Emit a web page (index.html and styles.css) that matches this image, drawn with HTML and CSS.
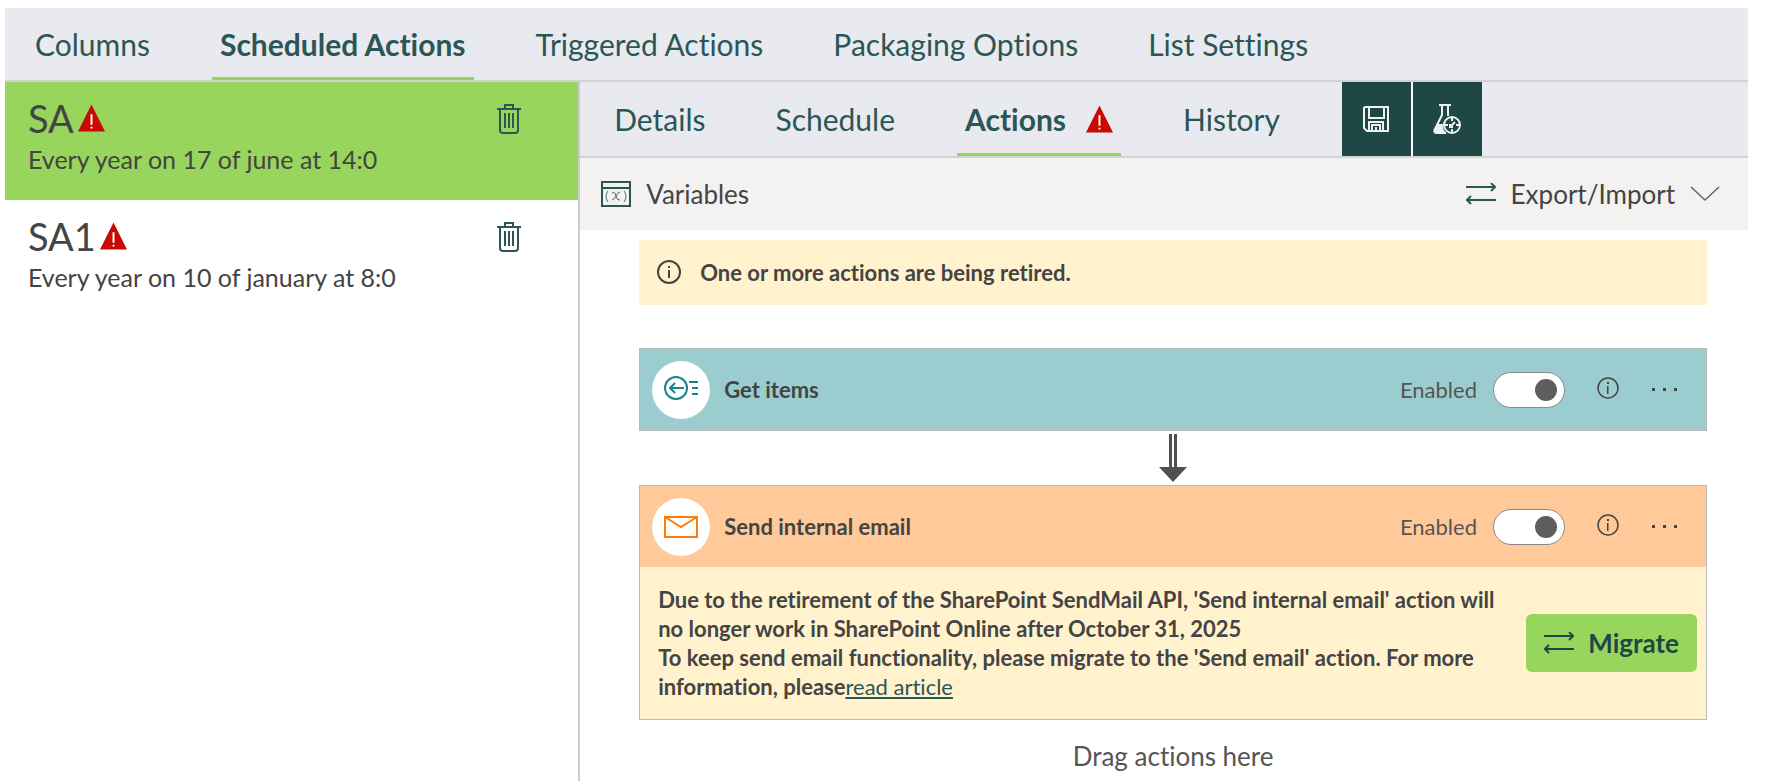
FILE: index.html
```html
<!DOCTYPE html>
<html lang="en">
<head>
    <meta charset="UTF-8">
    <meta name="viewport" content="width=device-width, initial-scale=1.0">
    <title>Scheduled Actions</title>
    <link rel="stylesheet" href="styles.css">
</head>
<body>
    <!-- shared icons -->
    <svg class="sprite" aria-hidden="true">
        <symbol id="icon-warning" viewBox="0 0 28 28">
            <path d="M14 0L28 28H0z" fill="#c80a04"/>
            <path d="M13 10h2v11h-2zM13 23h2v2h-2z" fill="#fff"/>
        </symbol>
        <symbol id="icon-trash" viewBox="0 0 24 30">
            <path d="M0 5h24M8 4V1h8v3M3 5v21q0 3 3 3h12q3 0 3-3V5M8 9v15M12 9v15M16 9v15" fill="none" stroke="currentColor" stroke-width="2"/>
        </symbol>
        <symbol id="icon-swap" viewBox="0 0 30 22">
            <path d="M0 4h29M25 0l4 4-4 4M30 17H1M5 13l-4 4 4 4" fill="none" stroke="currentColor" stroke-width="2"/>
        </symbol>
        <symbol id="icon-info" viewBox="0 0 26 26">
            <circle cx="13" cy="12" r="11" fill="none" stroke="currentColor" stroke-width="2"/>
            <path d="M12 6h2v2h-2zM12 10h2v8h-2z" fill="currentColor"/>
        </symbol>
        <symbol id="icon-info-thin" viewBox="0 0 26 26">
            <circle cx="13" cy="11" r="10" fill="none" stroke="currentColor" stroke-width="1.5"/>
            <path d="M12 5h2v2h-2zM12 9h1.5v8H12z" fill="currentColor"/>
        </symbol>
        <symbol id="icon-more" viewBox="0 0 28 26">
            <path d="M1 11h3v3H1zM12 11h3v3h-3zM23 11h3v3h-3z" fill="currentColor"/>
        </symbol>
    </svg>

    <nav class="tabs">
        <a class="tab" href="#">Columns</a>
        <a class="tab active" href="#">Scheduled Actions</a>
        <a class="tab" href="#">Triggered Actions</a>
        <a class="tab" href="#">Packaging Options</a>
        <a class="tab" href="#">List Settings</a>
    </nav>

    <div class="layout">
        <aside class="sidebar">
            <div class="item selected">
                <div class="item-text">
                    <h2>SA<svg class="warning"><use href="#icon-warning"/></svg></h2>
                    <p>Every year on 17 of june at 14:0</p>
                </div>
                <button class="icon-button" aria-label="Delete SA"><svg class="trash"><use href="#icon-trash"/></svg></button>
            </div>
            <div class="item">
                <div class="item-text">
                    <h2>SA1<svg class="warning"><use href="#icon-warning"/></svg></h2>
                    <p>Every year on 10 of january at 8:0</p>
                </div>
                <button class="icon-button" aria-label="Delete SA1"><svg class="trash"><use href="#icon-trash"/></svg></button>
            </div>
        </aside>

        <main class="content">
            <nav class="tabs subtabs">
                <a class="tab" href="#">Details</a>
                <a class="tab" href="#">Schedule</a>
                <a class="tab active" href="#">Actions<svg class="warning"><use href="#icon-warning"/></svg></a>
                <a class="tab" href="#">History</a>
                <div class="tools">
                    <button class="tool" aria-label="Save">
                        <svg width="28" height="28" viewBox="0 0 28 28" fill="none" stroke="#eef3f2" stroke-width="2">
                            <path d="M3 2h23v24H5l-3-3V3zM7 2v11h15V2M7 26v-9h14v9M10 26v-6h8v6M14 22v4"/>
                        </svg>
                    </button>
                    <button class="tool" aria-label="Test">
                        <svg width="28" height="30" viewBox="0 0 28 30" fill="none" stroke="#eef3f2" stroke-width="2">
                            <path d="M6 1h12M9 1v10L2 25q-2 4 2 4h9M15 1v11"/>
                            <path d="M4 20h6q-1 5 3 9H3q-4-1-1-5z" fill="#eef3f2" stroke="none"/>
                            <circle cx="19" cy="21" r="8"/>
                            <path d="M19 13v4M19 25v4M11 21h4M23 21h4M18 22l4-4M17 20v3h3"/>
                        </svg>
                    </button>
                </div>
            </nav>

            <div class="command-bar">
                <button class="command">
                    <svg width="30" height="26" viewBox="0 0 30 26">
                        <path d="M1 1h28v24H1zM1 7h28" fill="none" stroke="#2b5656" stroke-width="2"/>
                        <path d="M7 10q-4 5 0 11M23 10q4 5 0 11M11 12q3-2 4 3t4 4M19 11q-2 0-4 4t-4 4" fill="none" stroke="#4a6c70"/>
                    </svg>
                    Variables
                </button>
                <button class="command">
                    <svg class="swap"><use href="#icon-swap"/></svg>
                    Export/Import
                    <svg width="30" height="16" viewBox="0 0 30 16"><path d="M1 1l14 13L29 1" fill="none" stroke="#666" stroke-width="1.5"/></svg>
                </button>
            </div>

            <div class="flow">
                <div class="alert">
                    <svg class="info"><use href="#icon-info"/></svg>
                    One or more actions are being retired.
                </div>

                <section class="card">
                    <div class="card-header get-items">
                        <span class="card-icon">
                            <svg width="34" height="28" viewBox="0 0 34 28" fill="none" stroke="#14868a" stroke-width="2">
                                <circle cx="12" cy="12" r="11"/>
                                <path d="M20 12H6M11 7l-5 5 5 5M25 6h9M28 12h6M28 18h6"/>
                            </svg>
                        </span>
                        <h3>Get items</h3>
                        <label class="enabled">Enabled <input type="checkbox" class="toggle" checked></label>
                        <button class="icon-button" aria-label="Info"><svg class="info"><use href="#icon-info-thin"/></svg></button>
                        <button class="icon-button" aria-label="More"><svg class="more"><use href="#icon-more"/></svg></button>
                    </div>
                </section>

                <svg class="arrow" width="28" height="48" viewBox="0 0 28 48" fill="#505050">
                    <path d="M10 0h3v34h-3zM15 0h3v34h-3zM0 33h28L14 48z"/>
                </svg>

                <section class="card">
                    <div class="card-header send-email">
                        <span class="card-icon">
                            <svg width="34" height="22" viewBox="0 0 34 22" fill="none" stroke="#ff7a0a" stroke-width="2">
                                <path d="M1 1h32v20H1zM1 1l16 10L33 1"/>
                            </svg>
                        </span>
                        <h3>Send internal email</h3>
                        <label class="enabled">Enabled <input type="checkbox" class="toggle" checked></label>
                        <button class="icon-button" aria-label="Info"><svg class="info"><use href="#icon-info-thin"/></svg></button>
                        <button class="icon-button" aria-label="More"><svg class="more"><use href="#icon-more"/></svg></button>
                    </div>
                    <div class="card-message">
                        <p>
                            Due to the retirement of the SharePoint SendMail API, 'Send internal email' action will no longer work in SharePoint Online after October 31, 2025<br>
                            To keep send email functionality, please migrate to the 'Send email' action. For more information, please<a href="#">read article</a>
                        </p>
                        <button class="migrate"><svg class="swap"><use href="#icon-swap"/></svg>Migrate</button>
                    </div>
                </section>

                <p class="drop-hint">Drag actions here</p>
            </div>
        </main>
    </div>
</body>
</html>
```
FILE: styles.css
```css
* {
    box-sizing: border-box;
}
body {
    margin: 0;
    padding: 8px 17px 0 5px;
    min-height: 100vh;
    display: flex;
    flex-direction: column;
    background: #fff;
    color: #444;
    font-family: Lato, "Noto Sans", sans-serif;
    font-size: 26px;
    font-variant-ligatures: none;
}
h2, h3, p {
    margin: 0;
}
button {
    font: inherit;
    font-variant-ligatures: none;
    color: inherit;
    border: none;
    background: none;
    padding: 0;
    cursor: pointer;
}
svg {
    display: block;
    flex: none;
}
.sprite {
    position: absolute;
    width: 0;
    height: 0;
}
.warning {
    width: 27px;
    height: 28px;
}
.trash {
    width: 24px;
    height: 30px;
}
.swap {
    width: 30px;
    height: 22px;
}
.info {
    width: 26px;
    height: 26px;
}
.more {
    width: 28px;
    height: 26px;
}

.tabs {
    display: flex;
    gap: 54px;
    height: 74px;
    padding-left: 22px;
    background: #e9eaef;
    border-bottom: 2px solid #d0d2d3;
}
.tab {
    display: flex;
    align-items: center;
    gap: 20px;
    padding: 0 8px;
    border-top: 3px solid transparent;
    border-bottom: 3px solid transparent;
    color: #2b5656;
    font-size: 30px;
    text-decoration: none;
    white-space: nowrap;
}
.tab.active {
    border-bottom-color: #97d55c;
    font-weight: bold;
}

.layout {
    display: flex;
    flex: 1;
}
.sidebar {
    flex: 0 0 33%;
    border-right: 2px solid #ccc;
}
.item {
    display: flex;
    justify-content: space-between;
    align-items: flex-start;
    height: 118px;
    padding: 15px 57px 0 23px;
}
.item.selected {
    background: #97d55c;
}
.item h2 {
    display: flex;
    align-items: center;
    gap: 4px;
    font-size: 38px;
    line-height: 42px;
    font-weight: normal;
}
.item p {
    font-size: 25px;
    line-height: 40px;
}
.icon-button {
    color: #2b5656;
}
.item .icon-button {
    margin-top: 7px;
}

.content {
    flex: 1;
    min-width: 0;
}
.subtabs {
    height: 76px;
    padding-left: 26px;
}
.tools {
    display: flex;
    gap: 2px;
    background: #fff;
}
.tool {
    display: flex;
    align-items: center;
    justify-content: center;
    width: 69px;
    background: #1f4745;
}

.command-bar {
    display: flex;
    justify-content: space-between;
    height: 72px;
    padding: 0 28px 0 21px;
    background: #f3f2f0;
}
.command {
    display: flex;
    align-items: center;
    gap: 15px;
}
.command .swap {
    color: #2b5656;
}

.flow {
    padding: 10px 41px 0 59px;
}
.alert {
    display: flex;
    align-items: center;
    gap: 18px;
    min-height: 65px;
    margin-bottom: 43px;
    padding-left: 17px;
    background: #fff2cd;
    font-size: 22px;
    font-weight: bold;
}
.card {
    border: 1px solid #bbb;
}
.card-header {
    display: flex;
    align-items: center;
    height: 81px;
    padding: 0 27px 0 12px;
    font-size: 22px;
}
.get-items {
    background: #9bcdd0;
}
.send-email {
    background: #ffc99a;
}
.card-icon {
    display: flex;
    align-items: center;
    justify-content: center;
    width: 58px;
    height: 58px;
    margin-right: 14px;
    border-radius: 50%;
    background: #fff;
}
.card-header h3 {
    flex: 1;
    font-size: 22px;
}
.card-header .icon-button {
    margin-left: 30px;
    color: #444;
}
.enabled {
    display: flex;
    align-items: center;
    gap: 16px;
    color: #555;
}
.toggle {
    appearance: none;
    display: flex;
    align-items: center;
    width: 72px;
    height: 36px;
    margin: 0;
    padding: 0 7px;
    border: 1px solid #888;
    border-radius: 18px;
    background: #fff;
}
.toggle::before {
    content: "";
    width: 22px;
    height: 22px;
    border-radius: 50%;
    background: #605e5c;
}
.toggle:checked {
    justify-content: flex-end;
}
.arrow {
    margin: 3px auto;
}
.card-message {
    display: flex;
    align-items: center;
    justify-content: space-between;
    gap: 16px;
    padding: 18px 9px 18px 18px;
    background: #fff2cd;
}
.card-message p {
    font-size: 22px;
    line-height: 29px;
    font-weight: bold;
}
.card-message a {
    color: #2b5656;
    font-weight: normal;
}
.migrate {
    display: flex;
    flex: none;
    align-items: center;
    gap: 14px;
    height: 58px;
    padding: 0 18px;
    border-radius: 6px;
    background: #97d55c;
    color: #1f4745;
    font-size: 26px;
    font-weight: bold;
}
.drop-hint {
    padding-top: 18px;
    color: #555;
    line-height: 36px;
    text-align: center;
}
```
